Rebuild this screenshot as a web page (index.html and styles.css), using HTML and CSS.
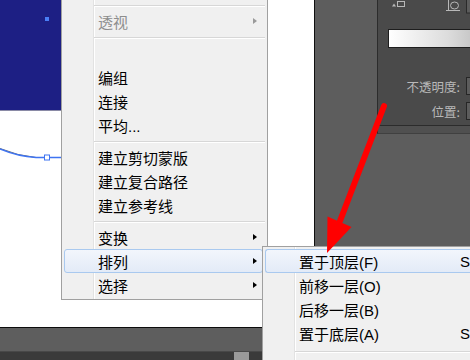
FILE: index.html
```html
<!DOCTYPE html>
<html lang="zh-CN">
<head>
<meta charset="utf-8">
<title>排列</title>
<link rel="stylesheet" href="styles.css">
</head>
<body>
<div class="app">
  <div class="canvas">
    <div class="shape"><span class="anchor"></span></div>
    <svg class="curve" width="120" height="24" viewBox="0 0 120 24">
      <path d="M0 8.5 Q 18 16 36 17.5" fill="none" stroke="#6a6a6a" stroke-width="1"/>
      <path d="M0 9 Q 18 16.5 36 17.5 L 120 17.5" fill="none" stroke="#3f74f2" stroke-width="1.4"/>
      <rect x="44.5" y="15" width="5" height="5" fill="#fff" stroke="#3f74f2" stroke-width="1"/>
    </svg>
  </div>
  <div class="dock">
    <div class="panel">
      <svg class="panel-icons" width="100" height="14" viewBox="0 0 100 14">
        <path d="M14 6.5 L16 3.5 L18 6.5 Z" fill="#b8b8b8"/>
        <rect x="19.5" y="1.5" width="7" height="5" fill="none" stroke="#b8b8b8" stroke-width="1"/>
        <path d="M70.5 0 V10 M68 10.5 H82" stroke="#b8b8b8" stroke-width="1" fill="none"/>
        <ellipse cx="76.5" cy="5.5" rx="4" ry="3.5" fill="none" stroke="#b8b8b8" stroke-width="1"/>
        <rect x="88.5" y="-1" width="12" height="14" fill="#5c5c5c" stroke="#2a2a2a" stroke-width="1"/>
      </svg>
      <div class="grad"></div>
      <div class="field field-first"><span class="label">不透明度:</span><span class="box"></span></div>
      <div class="field"><span class="label">位置:</span><span class="box"></span></div>
    </div>
    <div class="panel-foot"></div>
  </div>
  <div class="status">
    <div class="bar"></div>
    <div class="scroll"><span class="thumb"></span></div>
  </div>
</div>

<div class="menu main-menu">
  <div class="item"><span class="name"></span></div>
  <div class="sep"></div>
  <div class="item disabled"><span class="name">透视</span><span class="tri"></span></div>
  <div class="sep"></div>
  <div class="item"><span class="name"></span></div>
  <div class="item"><span class="name">编组</span></div>
  <div class="item"><span class="name">连接</span></div>
  <div class="item"><span class="name">平均...</span></div>
  <div class="sep"></div>
  <div class="item"><span class="name">建立剪切蒙版</span></div>
  <div class="item"><span class="name">建立复合路径</span></div>
  <div class="item"><span class="name">建立参考线</span></div>
  <div class="sep"></div>
  <div class="item"><span class="name">变换</span><span class="tri"></span></div>
  <div class="item active"><span class="name">排列</span><span class="tri"></span></div>
  <div class="item"><span class="name">选择</span><span class="tri"></span></div>
</div>

<div class="menu sub-menu">
  <div class="item active"><span class="name">置于顶层(F)</span><span class="key">S</span></div>
  <div class="item"><span class="name">前移一层(O)</span><span class="key"></span></div>
  <div class="item"><span class="name">后移一层(B)</span><span class="key"></span></div>
  <div class="item"><span class="name">置于底层(A)</span><span class="key">S</span></div>
  <div class="sep sep-wide"></div>
  <div class="item"><span class="name">发送至当前图层(L)</span><span class="key"></span></div>
</div>

<svg class="arrow" width="470" height="360" viewBox="0 0 470 360">
  <line x1="384" y1="106" x2="340" y2="221" stroke="#ff0000" stroke-width="6" stroke-linecap="round"/>
  <polygon points="327,253 327.5,216.5 351.5,227" fill="#ff0000"/>
</svg>
</body>
</html>
```

FILE: styles.css
```css
html, body {
  margin: 0;
  padding: 0;
  width: 470px;
  height: 360px;
  overflow: hidden;
}

body {
  position: relative;
  background: #ffffff;
  font-family: "Liberation Sans", "Noto Sans CJK SC", sans-serif;
}

.app {
  display: grid;
  grid-template-columns: 314px 156px;
  grid-template-rows: 327px 33px;
  width: 470px;
  height: 360px;
}

/* ---------- canvas ---------- */
.canvas {
  background: #ffffff;
  overflow: hidden;
}

.shape {
  box-sizing: border-box;
  width: 220px;
  height: 111px;
  padding: 17px 0 0 45px;
  background: #1d1f84;
  border-bottom: 1px solid #8a8aa6;
}

.anchor {
  display: block;
  width: 4px;
  height: 4px;
  background: #4a7ef6;
}

.curve {
  display: block;
  margin-top: 29px;
}

/* ---------- dock ---------- */
.dock {
  background: #5d5d5d;
  border-left: 1px solid #101010;
  padding-left: 62px;
  overflow: hidden;
}

.panel {
  box-sizing: border-box;
  width: 140px;
  height: 126px;
  background: #4a4a4a;
  border-left: 1px solid #2c2c2c;
  border-bottom: 1px solid #2c2c2c;
}

.panel-icons {
  display: block;
}

.grad {
  box-sizing: border-box;
  width: 120px;
  height: 19px;
  margin: 15px 0 0 10px;
  border: 1px solid #1e1e1e;
  background: linear-gradient(to right, #ffffff 0%, #dcdcdc 50%, #a8a8a8 100%);
}

.field {
  display: flex;
  align-items: center;
  height: 18px;
  margin-top: 7px;
  font-size: 12.5px;
  color: #b9b9b9;
  font-family: "Noto Sans CJK SC", sans-serif;
}

.field-first {
  margin-top: 29px;
}

.label {
  width: 82px;
  text-align: right;
  white-space: nowrap;
}

.box {
  box-sizing: border-box;
  width: 30px;
  height: 18px;
  margin-left: 6px;
  background: #5c5c5c;
  border: 1px solid #262626;
}

.panel-foot {
  box-sizing: border-box;
  width: 140px;
  height: 8px;
  background: #505050;
  border-left: 1px solid #2c2c2c;
  border-bottom: 1px solid #404040;
}

/* ---------- bottom bar ---------- */
.status {
  grid-column: 1 / 3;
  border-top: 1px solid #0c0c0c;
  display: flex;
  flex-direction: column;
}

.bar {
  height: 25px;
  background: #5e5e5e;
  border-bottom: 1px solid #484848;
}

.scroll {
  flex: 1;
  background: #3a3a3a;
  padding-left: 234px;
}

.thumb {
  display: block;
  width: 15px;
  height: 8px;
  background: #9a9a9a;
}

/* ---------- menus ---------- */
.menu {
  position: absolute;
  box-sizing: border-box;
  border: 1px solid #a0a0a0;
  padding: 2px 0;
  background: linear-gradient(to right,
    #f0f0f0 0, #f0f0f0 31px,
    #e2e2e2 31px, #e2e2e2 32px,
    #ffffff 32px, #ffffff 33px,
    #f0f0f0 33px);
  font-size: 15px;
  color: #000000;
  white-space: nowrap;
}

.main-menu {
  left: 61px;
  top: -26px;
  width: 207px;
}

.sub-menu {
  left: 262px;
  top: 246px;
  width: 208px;
  border-right: 0;
}

.item {
  box-sizing: border-box;
  display: flex;
  align-items: center;
  height: 24px;
  margin: 0 4px 0 2px;
  padding: 0 5px 0 33px;
  border: 1px solid transparent;
  border-radius: 3px;
}

.sub-menu .item {
  margin-right: 0;
  padding-right: 0;
  border-right: 0;
  border-radius: 3px 0 0 3px;
}

.item .name {
  flex: 1;
}

.item.disabled {
  color: #8d8d8d;
}

.item.active {
  border-color: #a9c9ef;
  background: linear-gradient(to bottom, #f2f6fc, #e3ebf7);
}

.tri {
  width: 0;
  height: 0;
  border-top: 3.5px solid transparent;
  border-bottom: 3.5px solid transparent;
  border-left: 4px solid #000000;
}

.disabled .tri {
  border-left-color: #9a9a9a;
}

.sub-menu .item .name {
  flex: 0 0 161px;
}

.key {
  flex: 1;
}

.sep {
  height: 1px;
  margin: 4px 2px 2px 32px;
  border-top: 1px solid #d7d7d7;
  background: #ffffff;
}

.sub-menu .sep {
  margin-right: 0;
}

.sep-wide {
  margin-top: 6px;
}

/* ---------- annotation ---------- */
.arrow {
  position: absolute;
  left: 0;
  top: 0;
  pointer-events: none;
}
```
